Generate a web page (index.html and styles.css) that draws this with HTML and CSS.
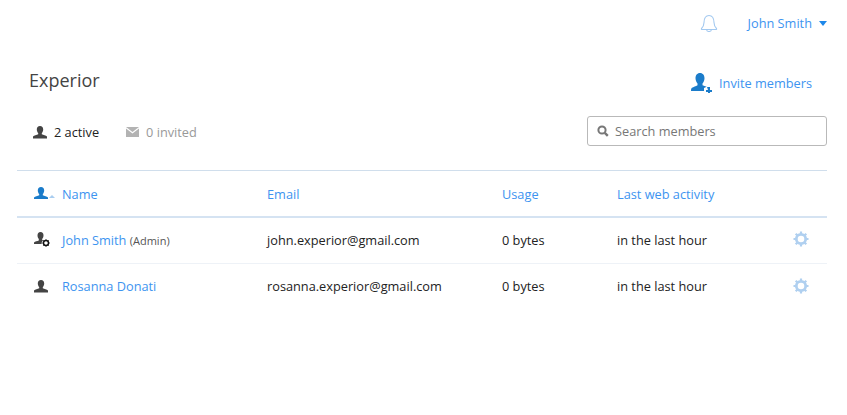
FILE: index.html
```html
<!DOCTYPE html>
<html lang="en">
<head>
  <meta charset="UTF-8">
  <title>Members</title>
  <link rel="stylesheet" href="styles.css">
</head>
<body>
  <header class="topbar">
    <svg class="bell" width="18" height="19" viewBox="0 0 18 19">
      <path d="M1.5 15.5c1.6-1.4 2.4-3 2.5-6 .1-3.600 1.600-7 5-7s4.900 3.400 5 7c.1 3 .9 4.600 2.500 6 .4.500 0 1-.5 1H2c-.5 0-.9-.5-.5-1z" fill="none" stroke="#a3c9f0" stroke-width="1.100"/>
      <path d="M6.500 16.500c.2 1.300 1.200 2 2.500 2s2.300-.7 2.500-2" fill="none" stroke="#a3c9f0" stroke-width="1.100"/>
    </svg>
    <a class="user-menu">John Smith<span class="caret"></span></a>
  </header>

  <section class="title-row">
    <h1>Experior</h1>
    <a class="invite">
      <svg width="21" height="20" viewBox="0 0 21 20">
        <path d="M9 0c3 0 4.500 2.300 4.500 5.200 0 2.200-1 4.300-2 5.300v1.700c1.300.7 2.800 1 4.200 1.600L13 15v3H0c0-1.800.2-2.800 1-3.300 1.500-.9 3.800-1.400 5.500-2.500v-1.700c-1-1-2-3.100-2-5.300C4.500 2.300 6 0 9 0z" fill="#1b7cca"/>
        <path d="M16 14h2v-0h1v3h2v2h-2v1h-2v-1h-2v-2h2z" fill="#1b7cca"/>
      </svg>
      Invite members
    </a>
  </section>

  <section class="filter-row">
    <div class="counts">
      <span class="count">
        <svg width="14" height="13" viewBox="0 0 14 13"><path d="M7 0c2.100 0 3.200 1.500 3.200 3.500 0 1.500-.7 2.900-1.400 3.700v1.100c1.500.7 4.200 1 5.200 2.200V12.500H0v-2c1-1.200 3.700-1.500 5.200-2.200V7.200C4.500 6.400 3.800 5 3.800 3.500 3.800 1.500 4.900 0 7 0z" fill="#444"/></svg>
        2 active
      </span>
      <span class="count invited">
        <svg width="13" height="10" viewBox="0 0 13 10"><path d="M0 0h13L6.500 5z" fill="#b3b3b3"/><path d="M0 1.500l6.500 5 6.500-5V10H0z" fill="#b3b3b3"/></svg>
        0 invited
      </span>
    </div>
    <label class="search">
      <svg width="12" height="12" viewBox="0 0 12 12"><circle cx="5" cy="5" r="3.600" fill="none" stroke="#777" stroke-width="2"/><path d="M7.800 7.800l3 3" stroke="#777" stroke-width="2.400"/></svg>
      <input type="text" placeholder="Search members">
    </label>
  </section>

  <section class="members">
    <div class="row head">
      <span class="icon-cell">
        <svg width="14" height="13" viewBox="0 0 14 13"><path d="M7 0c2.100 0 3.200 1.500 3.200 3.500 0 1.500-.7 2.900-1.400 3.700v1.100c1.500.7 4.200 1 5.200 2.200V12H0v-1.500c1-1.200 3.700-1.500 5.200-2.200V7.200C4.500 6.400 3.800 5 3.800 3.500 3.800 1.500 4.900 0 7 0z" fill="#1b7cca"/></svg>
        <span class="sort"></span>
      </span>
      <span>Name</span>
      <span>Email</span>
      <span>Usage</span>
      <span>Last web activity</span>
    </div>

    <div class="row">
      <span class="icon-cell">
        <svg class="admin" width="18" height="15" viewBox="0 0 18 15">
          <path d="M6.500 0c2 0 3 1.500 3 3.400 0 1.400-.6 2.700-1.300 3.500v1.100l1 .5c-1.200.8-1.700 2.100-1.500 3.500H0v-1.500c1-1.200 3.400-1.500 4.800-2.100V6.900C4.100 6.100 3.500 4.800 3.500 3.400 3.500 1.500 4.500 0 6.500 0z" fill="#444"/>
          <circle cx="12" cy="11" r="2.500" fill="none" stroke="#111" stroke-width="1.400"/>
          <path d="M12 7.300v1.400M12 13.300v1.400M8.300 11h1.400M14.300 11h1.400M9.400 8.400l1 1M13.600 12.600l1 1M14.600 8.400l-1 1M10.400 12.600l-1 1" stroke="#111" stroke-width="1"/>
        </svg>
      </span>
      <span class="name"><a>John Smith</a> <small>(Admin)</small></span>
      <span>john.experior@gmail.com</span>
      <span>0 bytes</span>
      <span>in the last hour</span>
      <svg class="gear" width="16" height="16" viewBox="0 0 16 16"><circle cx="8" cy="8" r="4.700" fill="none" stroke="#b0d0f0" stroke-width="2.800"/><path d="M8 .5v3M8 12.500v3M.5 8h3M12.500 8h3M2.700 2.700l2.100 2.100M11.200 11.200l2.100 2.100M13.300 2.700l-2.100 2.100M4.800 11.200l-2.100 2.100" stroke="#b0d0f0" stroke-width="2.200"/></svg>
    </div>

    <div class="row">
      <span class="icon-cell">
        <svg width="14" height="13" viewBox="0 0 14 13"><path d="M7 0c2.100 0 3.200 1.500 3.200 3.500 0 1.500-.7 2.900-1.400 3.700v1.100c1.500.7 4.200 1 5.200 2.200V12.500H0v-2c1-1.200 3.700-1.500 5.200-2.200V7.200C4.500 6.400 3.800 5 3.800 3.500 3.800 1.500 4.900 0 7 0z" fill="#444"/></svg>
      </span>
      <span class="name"><a>Rosanna Donati</a></span>
      <span>rosanna.experior@gmail.com</span>
      <span>0 bytes</span>
      <span>in the last hour</span>
      <svg class="gear" width="16" height="16" viewBox="0 0 16 16"><circle cx="8" cy="8" r="4.700" fill="none" stroke="#b0d0f0" stroke-width="2.800"/><path d="M8 .5v3M8 12.500v3M.5 8h3M12.500 8h3M2.700 2.700l2.100 2.100M11.200 11.200l2.100 2.100M13.300 2.700l-2.100 2.100M4.800 11.200l-2.100 2.100" stroke="#b0d0f0" stroke-width="2.200"/></svg>
    </div>
  </section>
</body>
</html>
```

FILE: styles.css
```css
body {
  margin: 0;
  padding: 0 20px 0 17px;
  background: #fff;
  color: #222;
  font-family: "Open Sans", sans-serif;
  font-size: 12.75px;
}

a {
  color: #3d94f0;
}

.topbar {
  display: flex;
  justify-content: flex-end;
  align-items: center;
  height: 46px;
}

.bell {
  margin-right: 30px;
  margin-top: -2px;
}

.user-menu {
  display: flex;
  align-items: center;
}

.caret {
  margin-left: 7px;
  border-left: 4.500px solid transparent;
  border-right: 4.500px solid transparent;
  border-top: 5px solid #1e88ea;
}

.title-row {
  display: flex;
  justify-content: space-between;
  align-items: center;
  height: 47px;
  padding: 0 15px 0 12px;
  margin-top: 13px;
}

h1 {
  margin: 0 0 6px;
  font-size: 18px;
  font-weight: 400;
  color: #444;
}

.invite {
  display: flex;
  align-items: center;
  gap: 7px;
}

.filter-row {
  display: flex;
  justify-content: space-between;
  align-items: center;
  height: 30px;
  margin-top: 10px;
  padding-left: 16px;
}

.counts {
  display: flex;
  gap: 27px;
  padding-top: 2px;
}

.count {
  display: flex;
  align-items: center;
  gap: 7px;
}

.invited {
  color: #999;
}

.search {
  display: flex;
  align-items: center;
  gap: 6px;
  box-sizing: border-box;
  width: 240px;
  height: 30px;
  padding: 0 9px;
  border: 1px solid #b9b9b9;
  border-radius: 3px;
}

.search input {
  flex: 1;
  min-width: 0;
  padding: 0;
  border: 0;
  outline: 0;
  font: inherit;
}

.search input::placeholder {
  color: #777;
  opacity: 1;
}

.members {
  margin-top: 24px;
}

.row {
  display: grid;
  grid-template-columns: 45px 205px 235px 115px 1fr 34px;
  align-items: center;
  box-sizing: border-box;
  height: 46px;
  padding-bottom: 2px;
  border-bottom: 1px solid #eef2f7;
}

.row.head {
  height: 48px;
  padding-bottom: 0;
  color: #3d94f0;
  border-top: 1px solid #d0deec;
  border-bottom: 2px solid #d5e3f2;
}

.icon-cell {
  display: flex;
  align-items: flex-end;
  padding-left: 17px;
}

.sort {
  margin: 0 0 2px 1px;
  border-left: 3px solid transparent;
  border-right: 3px solid transparent;
  border-bottom: 3px solid #a9cdf0;
}

.name small {
  font-size: 11px;
  color: #555;
}

.gear {
  margin-top: -1px;
}

.row:last-child {
  border-bottom: 0;
}
```
